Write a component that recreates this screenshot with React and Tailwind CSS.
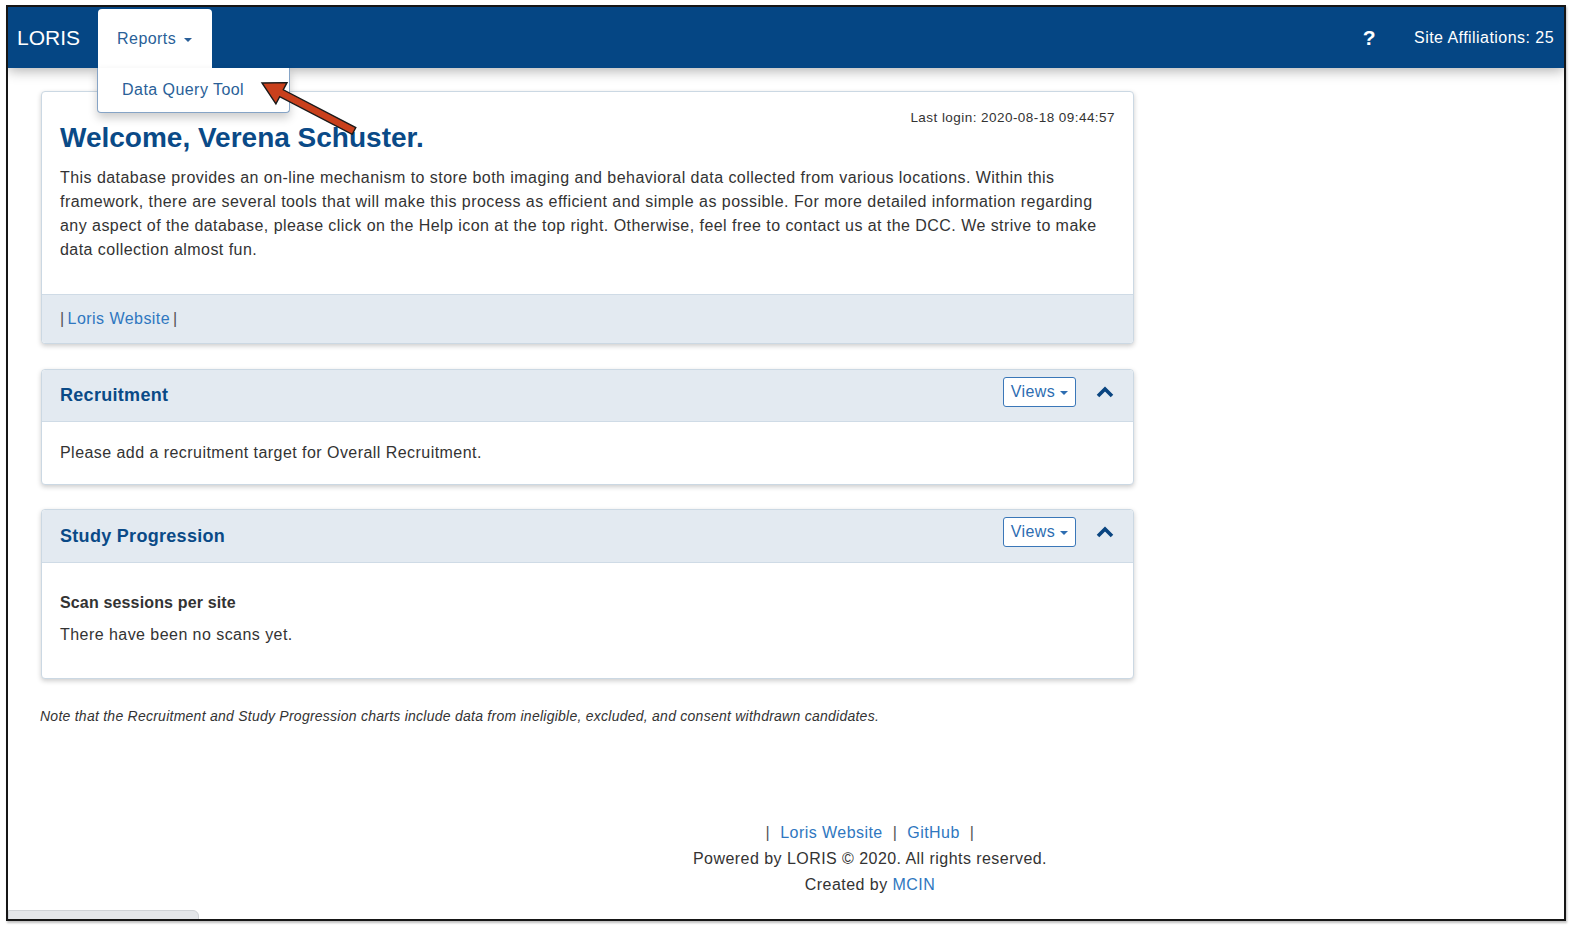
import React from "react";

const Caret = ({ className = "" }) => (
  <span className={`inline-block w-0 h-0 border-x-[4px] border-x-transparent border-t-[4px] ${className}`} />
);

const ChevronUp = () => (
  <svg width="18" height="12" viewBox="0 0 18 12" className="text-[#0a4580]">
    <path d="M2 10 L9 3 L16 10" fill="none" stroke="currentColor" strokeWidth="3.6" strokeLinejoin="miter" />
  </svg>
);

const PanelHeader = ({ title, h = "h-[52px]" }) => (
  <div className={`${h} flex items-center justify-between pl-[18px] pr-[19px] bg-[#e3eaf1] border-b border-[#cfdbe6] rounded-t-[4px]`}>
    <h3 className="text-[18px] font-bold tracking-[0.3px] text-[#0a4a87]">{title}</h3>
    <div className="flex items-center gap-[20px] mb-[8px]">
      <button className="h-[30px] w-[73px] flex items-center justify-center gap-[5px] bg-white border border-[#3a77b8] rounded-[3px] text-[16px] text-[#2d6db1]">
        Views <Caret className="border-t-[#2d6db1] mt-[2px]" />
      </button>
      <ChevronUp />
    </div>
  </div>
);

const Panel = ({ children, className = "" }) => (
  <div className={`w-[1093px] bg-white border border-[#cbd8e3] rounded-[4px] shadow-[0_2px_5px_rgba(0,0,0,0.2)] ${className}`}>
    {children}
  </div>
);

export default function App() {
  return (
    <div className="relative w-[1584px] h-[932px] bg-white pl-[6px] pt-[5px] font-['Liberation_Sans',Arial,sans-serif] tracking-[0.45px] text-[#333]">
      <div className="relative w-[1560px] h-[916px] border-2 border-[#161616] overflow-hidden bg-white flex flex-col shadow-[1px_2px_2px_rgba(0,0,0,0.25)]">
        {/* navbar */}
        <nav className="relative z-10 h-[61px] shrink-0 bg-[#054684] flex items-stretch justify-between shadow-[0_3px_12px_rgba(0,0,0,0.3)]">
          <div className="flex items-stretch">
            <div className="pl-[9px] pr-[18px] flex items-center text-[21px] text-white tracking-normal">LORIS</div>
            <div className="relative mt-[2px] w-[114px] bg-white rounded-t-[4px] flex items-center pl-[19px] gap-[8px] text-[16px] text-[#2a5f98]">
              Reports <Caret className="border-t-[#2a5f98] mt-[2px]" />
              <div className="absolute left-[-1px] top-full w-[193px] h-[45px] bg-white border border-t-0 border-[#86a4c6] rounded-b-[4px] shadow-[0_5px_10px_rgba(0,0,0,0.2)] flex items-center pl-[24px] text-[16px] text-[#2a5f98]">
                Data Query Tool
              </div>
            </div>
          </div>
          <div className="flex items-center pr-[10px] text-white">
            <span className="text-[21px] font-bold mr-[38px]">?</span>
            <span className="text-[16px]">Site Affiliations: 25</span>
          </div>
        </nav>

        <main className="pl-[32px]">
          {/* welcome panel */}
          <Panel className="mt-[23px] ml-[1px]">
            <div className="px-[18px] pt-[18px] pb-[32px]">
              <div className="text-right text-[13.5px] leading-[16px] text-[#333]">Last login: 2020-08-18 09:44:57</div>
              <h1 className="mt-[-2px] text-[28px] leading-[28px] font-bold tracking-normal text-[#0a4a87]">Welcome, Verena Schuster.</h1>
              <p className="mt-[14px] text-[16px] leading-[24px] text-[#333]">
                This database provides an on-line mechanism to store both imaging and behavioral data collected from various locations. Within this framework, there are several tools that will make this process as efficient and simple as possible. For more detailed information regarding any aspect of the database, please click on the Help icon at the top right. Otherwise, feel free to contact us at the DCC. We strive to make data collection almost fun.
              </p>
            </div>
            <div className="h-[49px] flex items-center px-[18px] bg-[#e3eaf1] border-t border-[#cfdbe6] rounded-b-[4px] text-[16px]">
              <span className="text-[#555]">|</span>
              <span className="mx-[3px] text-[#2f77c0]">Loris Website</span>
              <span className="text-[#555]">|</span>
            </div>
          </Panel>

          {/* recruitment */}
          <Panel className="mt-[25px] ml-[1px]">
            <PanelHeader title="Recruitment" />
            <div className="px-[18px] pt-[19px] pb-[19px] text-[16px] leading-[24px]">
              Please add a recruitment target for Overall Recruitment.
            </div>
          </Panel>

          {/* study progression */}
          <Panel className="mt-[24px] ml-[1px]">
            <PanelHeader title="Study Progression" h="h-[53px]" />
            <div className="px-[18px] pt-[28px] pb-[31px] text-[16px] leading-[24px]">
              <div className="font-bold tracking-[0.15px]">Scan sessions per site</div>
              <div className="mt-[8px]">There have been no scans yet.</div>
            </div>
          </Panel>

          <p className="mt-[27px] text-[14px] leading-[20px] italic tracking-[0.25px] text-[#333]">
            Note that the Recruitment and Study Progression charts include data from ineligible, excluded, and consent withdrawn candidates.
          </p>
        </main>

        {/* footer */}
        <footer className="mt-[94px] pl-[168px] flex flex-col items-center text-[16px] leading-[26px] text-[#333]">
          <div className="flex items-center">
            <span className="text-[#555]">|</span>
            <span className="mx-[10px] text-[#2f77c0]">Loris Website</span>
            <span className="text-[#555]">|</span>
            <span className="mx-[10px] text-[#2f77c0]">GitHub</span>
            <span className="text-[#555]">|</span>
          </div>
          <div>Powered by LORIS © 2020. All rights reserved.</div>
          <div>
            Created by <span className="text-[#2f77c0]">MCIN</span>
          </div>
        </footer>

        {/* status bar tab */}
        <div className="absolute left-0 bottom-[-3px] w-[191px] h-[12px] bg-[#e4e6e9] border border-[#cfd2d6] rounded-tr-[6px]" />
      </div>

      {/* red annotation arrow */}
      <svg className="absolute left-0 top-0 z-20 pointer-events-none" width="1584" height="932" viewBox="0 0 1584 932">
        <polygon
          points="262,83 287,82.6 283.3,89.8 355.8,127.6 352.2,134.4 279.7,96.6 275.9,103.8"
          fill="#c9401c"
          stroke="#1a1a1a"
          strokeWidth="1.4"
          strokeLinejoin="miter"
        />
      </svg>
    </div>
  );
}
